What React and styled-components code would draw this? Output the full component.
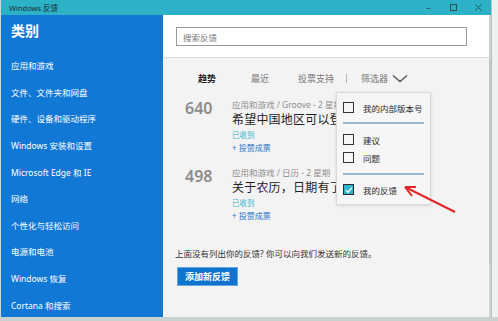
import React from 'react';
import styled, { createGlobalStyle } from 'styled-components';

const GlobalStyle = createGlobalStyle`
  html, body {
    margin: 0;
    padding: 0;
    background: #c9d0d0;
  }
  body {
    font-family: 'Noto Sans', 'Noto Sans CJK SC', sans-serif;
    width: 498px;
    height: 321px;
    overflow: hidden;
  }
`

const Desk = styled.div`
  display: flex;
  width: 498px;
  height: 317px;
  background: #eef1f1;
`

const Window = styled.div`
  display: flex;
  flex-direction: column;
  width: 492px;
  height: 317px;
  border-right: 1px solid #b9c2c2;
  border-left: 1px solid #d0d8d8;
  box-sizing: border-box;
  background: #f3f3f3;
`

const TitleBar = styled.div`
  display: flex;
  align-items: center;
  height: 15px;
  background: #2cb1c7;
  padding-left: 8px;
`

const TitleText = styled.div`
  flex: 1;
  font-size: 7.5px;
  color: #1d2b30;
`

const WinButton = styled.div`
  width: 25px;
  display: flex;
  justify-content: center;
  align-items: center;
  color: #24535c;
  font-size: 9px;
  line-height: 15px;
`

const Body = styled.div`
  flex: 1;
  display: flex;
  min-height: 0;
`

const Side = styled.nav`
  width: 162px;
  background: #1178d5;
  color: #fff;
  padding-left: 10px;
  box-sizing: border-box;
`

const SideTitle = styled.div`
  font-size: 14px;
  font-weight: 700;
  line-height: 20px;
  margin: 6px 0 11px;
`

const SideItem = styled.div`
  height: 26.6px;
  display: flex;
  align-items: center;
  font-size: 8.5px;
  white-space: nowrap;
`

const Main = styled.div`
  flex: 1;
  display: flex;
  flex-direction: column;
  position: relative;
  border-right: 2px solid #d2d4d4;
`

const Header = styled.div`
  height: 43px;
  background: #fff;
  border-bottom: 1px solid #dcdcdc;
  box-sizing: border-box;
  padding: 12px 0 0 13px;
`

const Search = styled.div`
  width: 291px;
  height: 19px;
  border: 1.5px solid #9a9a9a;
  box-sizing: border-box;
  font-size: 8.5px;
  color: #777;
  padding-left: 6px;
  display: flex;
  align-items: center;
`

const Tabs = styled.div`
  display: flex;
  align-items: center;
  height: 20px;
  margin-top: 10px;
  padding-left: 35px;
  font-size: 9px;
`

const Tab = styled.div`
  margin-left: ${p => p.$ml || 0}px;
  color: ${p => (p.$active ? '#222' : '#777')};
  font-weight: ${p => (p.$active ? 700 : 400)};
  white-space: nowrap;
`

const Divider = styled.div`
  margin-left: ${p => p.$ml}px;
  width: 1px;
  height: 9px;
  background: #b5b5b5;
`

const List = styled.div`
  padding-left: 22px;
  margin-top: 11px;
`

const Item = styled.div`
  display: flex;
  margin-bottom: 12px;
`

const Votes = styled.div`
  width: 47px;
  font-size: 16px;
  font-weight: 600;
  line-height: 18px;
  color: #8c8c8c;
`

const Info = styled.div`
  display: flex;
  flex-direction: column;
  white-space: nowrap;
`

const Category = styled.div`
  font-size: 8.5px;
  line-height: 12px;
  color: #8e8e8e;
`

const Headline = styled.div`
  font-size: 12px;
  line-height: 18px;
  color: #1f1f1f;
  letter-spacing: 0.2px;
`

const Status = styled.div`
  font-size: 7.5px;
  line-height: 12px;
  color: #3cb6cc;
`

const Upvote = styled.div`
  font-size: 8px;
  line-height: 14px;
  color: #2b73c6;
`

const Footer = styled.div`
  padding-left: 12px;
  margin-top: 12px;
`

const Notice = styled.div`
  font-size: 8.5px;
  line-height: 14px;
  color: #333;
`

const AddButton = styled.div`
  display: inline-block;
  margin: 6px 0 0 2px;
  padding: 0 7px;
  height: 17px;
  line-height: 17px;
  background: #0f74cf;
  border: 1px solid #6aa6de;
  color: #fff;
  font-size: 9px;
  font-weight: 700;
`

const Menu = styled.div`
  position: absolute;
  left: 173px;
  top: 77px;
  width: 95px;
  background: #f6f6f6;
  border: 1px solid #dadada;
  box-shadow: 0 1px 3px rgba(0, 0, 0, 0.12);
  box-sizing: border-box;
  padding: 8px 6px 8px 6px;
`

const MenuRow = styled.div`
  display: flex;
  align-items: center;
  height: 13px;
  margin-top: ${p => p.$mt || 0}px;
  font-size: 8.5px;
  color: #2a2a2a;
  white-space: nowrap;
`

const Box = styled.div`
  width: 11px;
  height: 11px;
  box-sizing: border-box;
  border: 1.5px solid ${p => (p.$checked ? '#2a2a2a' : '#333')};
  background: ${p => (p.$checked ? '#30b6cb' : 'transparent')};
  margin-right: 9px;
  display: flex;
  align-items: center;
  justify-content: center;
`

const Rule = styled.div`
  height: 2px;
  background: #9db8cd;
  margin: ${p => p.$m};
`

const Arrow = styled.svg`
  position: absolute;
  left: 241px;
  top: 157px;
  overflow: visible;
`

const Scroll = styled.div`
  position: absolute;
  right: -2px;
  top: 44px;
  width: 2px;
  height: 205px;
  background: #c3c8c8;
`

const sideItems = [
  '应用和游戏',
  '文件、文件夹和网盘',
  '硬件、设备和驱动程序',
  'Windows 安装和设置',
  'Microsoft Edge 和 IE',
  '网络',
  '个性化与轻松访问',
  '电源和电池',
  'Windows 恢复',
  'Cortana 和搜索',
]

const feedback = [
  { votes: 640, cat: '应用和游戏 / Groove - 2 星期', title: '希望中国地区可以登录' },
  { votes: 498, cat: '应用和游戏 / 日历 - 2 星期', title: '关于农历，日期有了' },
]

function Check({ checked }) {
  return (
    <Box $checked={checked}>
      {checked && (
        <svg width="8" height="8" viewBox="0 0 8 8">
          <path d="M1 4.2 L3.1 6.2 L7 1.6" fill="none" stroke="#fff" strokeWidth="1.3" />
        </svg>
      )}
    </Box>
  )
}

export default function App() {
  return (
    <>
      <GlobalStyle />
      <Desk>
        <Window>
          <TitleBar>
            <TitleText>Windows 反馈</TitleText>
            <WinButton>–</WinButton>
            <WinButton>
              <svg width="7" height="7" viewBox="0 0 7 7">
                <rect x="0.5" y="0.5" width="6" height="6" fill="none" stroke="#24535c" />
              </svg>
            </WinButton>
            <WinButton>
              <svg width="7" height="7" viewBox="0 0 7 7">
                <path d="M0.5 0.5 L6.5 6.5 M6.5 0.5 L0.5 6.5" stroke="#24535c" />
              </svg>
            </WinButton>
          </TitleBar>
          <Body>
            <Side>
              <SideTitle>类别</SideTitle>
              {sideItems.map(s => <SideItem key={s}>{s}</SideItem>)}
            </Side>
            <Main>
              <Header>
                <Search>搜索反馈</Search>
              </Header>
              <Tabs>
                <Tab $active>趋势</Tab>
                <Tab $ml={35}>最近</Tab>
                <Tab $ml={29}>投票支持</Tab>
                <Divider $ml={12} />
                <Tab $ml={14}>筛选器</Tab>
                <svg width="16" height="9" viewBox="0 0 16 9" style={{ marginLeft: 4 }}>
                  <path d="M1 1.5 L8 7.5 L15 1.5" fill="none" stroke="#555" strokeWidth="1.4" />
                </svg>
              </Tabs>
              <List>
                {feedback.map(f => (
                  <Item key={f.votes}>
                    <Votes>{f.votes}</Votes>
                    <Info>
                      <Category>{f.cat}</Category>
                      <Headline>{f.title}</Headline>
                      <Status>已收到</Status>
                      <Upvote>+ 投赞成票</Upvote>
                    </Info>
                  </Item>
                ))}
              </List>
              <Footer>
                <Notice>上面没有列出你的反馈? 你可以向我们发送新的反馈。</Notice>
                <AddButton>添加新反馈</AddButton>
              </Footer>
              <Menu>
                <MenuRow><Check />我的内部版本号</MenuRow>
                <Rule $m="8px 0 0" />
                <MenuRow $mt={9}><Check />建议</MenuRow>
                <MenuRow $mt={5}><Check />问题</MenuRow>
                <Rule $m="9px 0 0" />
                <MenuRow $mt={8}><Check checked />我的反馈</MenuRow>
              </Menu>
              <Arrow width="60" height="40">
                <path d="M3 16 L51 40" stroke="#e3262a" strokeWidth="2" fill="none" />
                <path d="M1 15 L12 15 M1 15 L8 24" stroke="#e3262a" strokeWidth="2" fill="none" />
              </Arrow>
              <Scroll />
            </Main>
          </Body>
        </Window>
      </Desk>
    </>
  )
}
